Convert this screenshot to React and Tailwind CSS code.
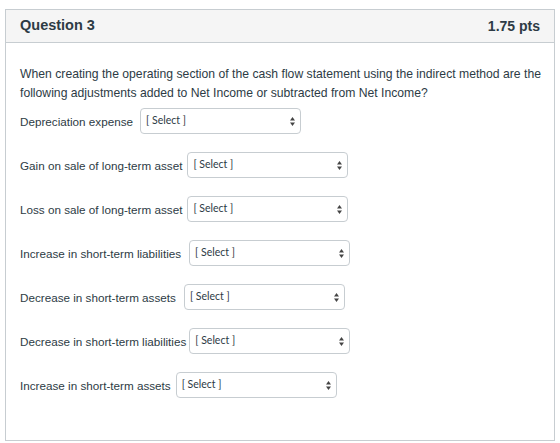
import React from "react";

const rows = [
  { label: "Depreciation expense", ml: "ml-[7px]" },
  { label: "Gain on sale of long-term asset", ml: "ml-[5px]" },
  { label: "Loss on sale of long-term asset", ml: "ml-[5px]" },
  { label: "Increase in short-term liabilities", ml: "ml-[8px]" },
  { label: "Decrease in short-term assets", ml: "ml-[8px]" },
  { label: "Decrease in short-term liabilities", ml: "ml-[3px]" },
  { label: "Increase in short-term assets", ml: "ml-[5px]" },
];

function SelectBox({ ml }) {
  return (
    <div
      className={`${ml} relative flex h-[26px] w-[161px] shrink-0 items-start rounded-[4px] border border-[#c7cdd1] bg-white pl-[5px] pt-[4px]`}
    >
      <span className="text-[10.5px] leading-[14px] text-[#2d3b45] [font-family:Lato,'Liberation_Sans',sans-serif]">
        [ Select ]
      </span>
      <svg
        className="absolute right-[5px] top-[8px]"
        width="5"
        height="9"
        viewBox="0 0 5 9"
      >
        <path d="M2.5 0 L5 3.5 L0 3.5 Z" fill="#444" />
        <path d="M2.5 9 L5 5.5 L0 5.5 Z" fill="#444" />
      </svg>
    </div>
  );
}

export default function App() {
  return (
    <div className="min-h-[443px] w-[560px] bg-white pl-[5px] pt-[9px] [font-family:'Liberation_Sans',Arial,sans-serif] text-[#2d3b45]">
      <div className="flex h-[432px] w-[550px] flex-col border border-[#c7cdd1]">
        <div className="flex h-[33px] shrink-0 items-center justify-between border-b border-[#c7cdd1] bg-[#f5f5f5] px-[14px]">
          <span className="text-[14.5px] font-bold">Question 3</span>
          <span className="text-[14px] font-bold">1.75 pts</span>
        </div>
        <div className="flex flex-col pl-[14px] pr-[4px] pt-[22px]">
          <p className="text-[12.2px] leading-[19px]">
            When creating the operating section of the cash flow statement using the indirect method are the
            <br />
            following adjustments added to Net Income or subtracted from Net Income?
          </p>
          <div className="mt-[5px] flex flex-col gap-[18px]">
            {rows.map((r) => (
              <div key={r.label} className="flex h-[26px] items-center">
                <span className="mt-[2px] whitespace-nowrap text-[11.7px] leading-[14px]">{r.label}</span>
                <SelectBox ml={r.ml} />
              </div>
            ))}
          </div>
        </div>
      </div>
    </div>
  );
}
